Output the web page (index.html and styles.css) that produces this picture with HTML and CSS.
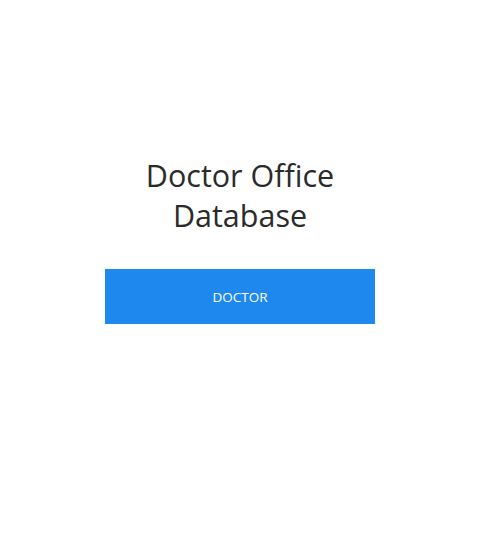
FILE: index.html
```html
<!DOCTYPE html>
<html>
<head>
<meta charset="utf-8">
<link rel="stylesheet" href="styles.css">
</head>
<body>
<main class="page">
  <div class="panel">
    <h1 class="title">Doctor Office Database</h1>
    <button class="btn">DOCTOR</button>
  </div>
</main>
</body>
</html>
```
FILE: styles.css
```css
html, body {
  margin: 0;
  padding: 0;
  background: #fff;
}
body {
  font-family: "Open Sans", "Noto Sans", sans-serif;
  color: #2b2b2b;
}
.page {
  display: flex;
  justify-content: center;
  padding-top: 155px;
  padding-left: 3px;
}
.panel {
  width: 270px;
  display: flex;
  flex-direction: column;
  align-items: stretch;
}
.title {
  margin: 0 0 34px;
  font-size: 30.5px;
  font-weight: 400;
  line-height: 40px;
  text-align: center;
}
.btn {
  height: 55px;
  border: none;
  border-radius: 0;
  background: #1e88ef;
  color: #fff;
  font-family: "Open Sans", sans-serif;
  font-size: 13.5px;
  padding: 0;
}
```
